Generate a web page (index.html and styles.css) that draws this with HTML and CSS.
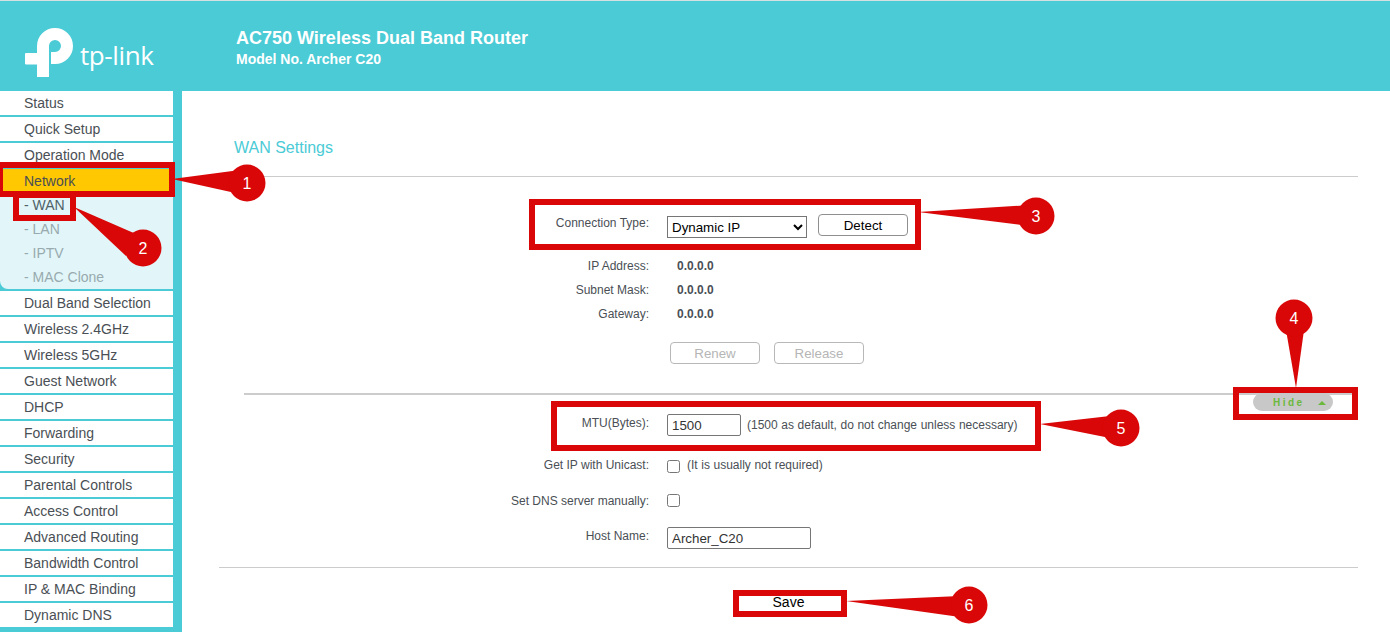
FILE: index.html
```html
<!DOCTYPE html>
<html lang="en">
<head>
<meta charset="utf-8">
<title>WAN Settings</title>
<link rel="stylesheet" href="styles.css">
</head>
<body>
<header class="top">
  <div class="brand">
    <svg class="mark" width="60" height="56" viewBox="20 24 60 56" aria-hidden="true">
      <path d="M43 77V46a12 12 0 1 1 12 12H51" fill="none" stroke="#fff" stroke-width="12"/>
      <rect x="25" y="53" width="24" height="11.500" rx="1" fill="#fff"/>
    </svg>
    <span class="word">tp-link</span>
  </div>
  <div class="product">
    <div class="prod-name">AC750 Wireless Dual Band Router</div>
    <div class="prod-model">Model No. Archer C20</div>
  </div>
</header>
<div class="shell">
  <nav class="side">
    <a class="item">Status</a>
    <a class="item">Quick Setup</a>
    <a class="item">Operation Mode</a>
    <a class="item active">Network</a>
    <div class="sub">
      <a class="sub-item current">- WAN</a>
      <a class="sub-item">- LAN</a>
      <a class="sub-item">- IPTV</a>
      <a class="sub-item">- MAC Clone</a>
    </div>
    <a class="item">Dual Band Selection</a>
    <a class="item">Wireless 2.4GHz</a>
    <a class="item">Wireless 5GHz</a>
    <a class="item">Guest Network</a>
    <a class="item">DHCP</a>
    <a class="item">Forwarding</a>
    <a class="item">Security</a>
    <a class="item">Parental Controls</a>
    <a class="item">Access Control</a>
    <a class="item">Advanced Routing</a>
    <a class="item">Bandwidth Control</a>
    <a class="item">IP &amp; MAC Binding</a>
    <a class="item">Dynamic DNS</a>
  </nav>
  <main class="main">
    <h1 class="title">WAN Settings</h1>
    <hr class="rule">
    <section class="form">
      <div class="row r-conn">
        <label class="lab">Connection Type:</label>
        <div class="val">
          <select class="sel"><option>Dynamic IP</option></select>
          <button class="btn detect" type="button">Detect</button>
        </div>
      </div>
      <div class="row r-info"><label class="lab">IP Address:</label><div class="val addr">0.0.0.0</div></div>
      <div class="row r-info"><label class="lab">Subnet Mask:</label><div class="val addr">0.0.0.0</div></div>
      <div class="row r-info"><label class="lab">Gateway:</label><div class="val addr">0.0.0.0</div></div>
      <div class="actions">
        <button class="btn off" type="button" disabled>Renew</button>
        <button class="btn off" type="button" disabled>Release</button>
      </div>
    </section>
    <div class="fold">
      <hr class="fold-line">
      <div class="hide">Hide<span class="caret"></span></div>
    </div>
    <section class="form">
      <div class="row r-mtu">
        <label class="lab">MTU(Bytes):</label>
        <div class="val"><input class="txt short" value="1500"><span class="note">(1500 as default, do not change unless necessary)</span></div>
      </div>
      <div class="row r-uni">
        <label class="lab">Get IP with Unicast:</label>
        <div class="val"><input class="chk" type="checkbox"><span class="note">(It is usually not required)</span></div>
      </div>
      <div class="row r-dns">
        <label class="lab">Set DNS server manually:</label>
        <div class="val"><input class="chk" type="checkbox"></div>
      </div>
      <div class="row r-host">
        <label class="lab">Host Name:</label>
        <div class="val"><input class="txt long" value="Archer_C20"></div>
      </div>
    </section>
    <hr class="rule rule-end">
    <div class="save-row"><button class="save" type="button">Save</button></div>
  </main>
</div>

<svg class="notes" width="1390" height="632" viewBox="0 0 1390 632">
  <g fill="#d90707">
    <path d="M172 179L240 170V194Z"/><circle cx="247" cy="183" r="18.500"/>
    <path d="M74 207L136 234L126 256Z"/><circle cx="143" cy="248" r="18.500"/>
    <path d="M918 212L1030 205V226Z"/><circle cx="1036" cy="216" r="18.500"/>
    <path d="M1286 330H1304L1296 388Z"/><circle cx="1294" cy="318" r="18.500"/>
    <path d="M1040 424L1110 416V438Z"/><circle cx="1121" cy="428" r="18.500"/>
    <path d="M846 601L960 596V617Z"/><circle cx="969" cy="605" r="18.500"/>
  </g>
  <g class="num">
    <text x="247" y="189">1</text>
    <text x="143" y="254">2</text>
    <text x="1036" y="222">3</text>
    <text x="1294" y="324">4</text>
    <text x="1121" y="434">5</text>
    <text x="969" y="611">6</text>
  </g>
  <g fill="none" stroke="#d90707" stroke-width="6">
    <rect x="0" y="165" width="172" height="29"/>
    <rect x="16" y="195" width="57" height="23"/>
    <rect x="532" y="202" width="386" height="45"/>
    <rect x="1236" y="390" width="119" height="27"/>
    <rect x="554" y="404" width="484" height="44"/>
    <rect x="736" y="593" width="108" height="21"/>
  </g>
</svg>
</body>
</html>
```
FILE: styles.css
```css
* { box-sizing: border-box; }
html, body { margin: 0; padding: 0; }
body {
  width: 1390px;
  height: 632px;
  overflow: hidden;
  position: relative;
  background: #fff;
  font-family: "Liberation Sans", Arial, sans-serif;
  color: #4a4f55;
}
.top {
  height: 91px;
  background: #4acbd6;
  border-top: 1px solid #d5e0e2;
  display: flex;
  color: #fff;
}
.brand {
  width: 236px;
  display: flex;
}
.mark { margin: 23px 0 0 20px; flex: none; }
.word {
  font-family: "Open Sans", sans-serif;
  font-size: 26px;
  font-weight: 400;
  letter-spacing: -0.4px;
  line-height: 30px;
  margin: 39px 0 0 0;
}
.product { padding-top: 26px; }
.prod-name { font-size: 18px; font-weight: 700; line-height: 22px; }
.prod-model { font-size: 14px; font-weight: 700; line-height: 18px; margin-top: 1px; }

.shell { display: flex; height: 541px; overflow: hidden; }
.side {
  width: 182px;
  flex: none;
  background: #4acbd6;
  padding-right: 9px;
}
.item {
  display: block;
  height: 24px;
  margin-bottom: 2px;
  padding-left: 24px;
  background: #fff;
  font-size: 14px;
  line-height: 24px;
  color: #4a4f55;
}
.item.active { background: #ffc800; margin-bottom: 0; }
.sub {
  background: #e2f6f9;
  border-bottom-left-radius: 8px;
  height: 96px;
  margin-bottom: 2px;
}
.sub-item {
  display: block;
  height: 24px;
  padding-left: 24px;
  font-size: 14px;
  line-height: 24px;
  color: #98aaae;
}
.sub-item.current { color: #4f6268; }

.main { flex: 1; padding: 0 32px 0 37px; }
.title {
  margin: 0;
  padding: 48px 0 0 15px;
  font-size: 16px;
  font-weight: 400;
  line-height: 18px;
  color: #4acbd6;
}
.rule { border: 0; height: 1px; background: #ccc; margin: 19px 0 0; }
.form { font-size: 12px; }
.row { display: flex; }
.lab { width: 448px; padding-right: 18px; text-align: right; flex: none; color: #4a4f55; }
.val { display: flex; align-items: center; }
.r-conn { padding-top: 36px; height: 77px; }
.r-conn .lab { line-height: 20px; }
.r-conn .val { margin-top: 3px; height: 20px; }
.sel {
  width: 140px;
  height: 22px;
  margin: 2px 11px 0 0;
  padding: 0;
  border: 1px solid #767676;
  border-radius: 0;
  background: #fff;
  font: 13.33px "Liberation Sans", Arial, sans-serif;
  color: #000;
}
.btn {
  width: 90px;
  height: 22px;
  padding: 0;
  border: 1px solid #8f8f8f;
  border-radius: 4px;
  background: #fff;
  font: 13.33px "Liberation Sans", Arial, sans-serif;
  color: #000;
}
.detect { margin-top: -2px; }
.r-info { height: 24px; line-height: 15px; padding-top: 5px; }
.addr { font-weight: 700; align-self: flex-start; padding-left: 10px; }
.actions { display: flex; gap: 14px; padding: 16px 0 0 451px; }
.off { border-color: #b8b8b8; color: #b5b5b5; }
.fold { height: 12px; margin-top: 29px; position: relative; }
.fold-line { border: 0; height: 2px; background: #ccc; margin: 0 0 0 25px; }
.hide {
  position: absolute;
  left: 1034px;
  top: 0;
  width: 80px;
  height: 18px;
  border-radius: 9px;
  background: #c8c8c8;
  color: #6cb83c;
  font-size: 10px;
  font-weight: 700;
  letter-spacing: 2.5px;
  line-height: 20px;
  padding-left: 20px;
}
.caret {
  position: absolute;
  right: 7px;
  top: 8px;
  border: 4px solid transparent;
  border-top: 0;
  border-bottom-color: #6cb83c;
}
.r-mtu { height: 47px; }
.r-mtu .lab { line-height: 18px; padding-top: 9px; }
.r-mtu .val { height: 22px; margin-top: 9px; }
.txt {
  height: 22px;
  padding: 0 5px 0 4px;
  border: 1px solid #767676;
  border-radius: 2px;
  font: 13.33px "Liberation Sans", Arial, sans-serif;
  color: #333;
  background: #fff;
}
.short { width: 74px; }
.long { width: 144px; }
.note { margin-left: 6px; word-spacing: 0.25px; }
.chk { margin: 0 1px 0 0; width: 13px; height: 13px; flex: none; }
.r-uni { height: 36px; padding-top: 6px; line-height: 15px; }
.r-uni .chk { margin-top: 2px; }
.r-uni .note { margin-top: 0; }
.r-uni .val, .r-dns .val { align-items: flex-start; }
.r-dns { height: 38px; padding-top: 6px; line-height: 15px; }
.r-host { height: 24px; }
.r-host .lab { line-height: 18px; padding-top: 1px; }
.rule-end { margin-top: 17px; }
.save-row { display: flex; justify-content: center; padding: 27px 0 0; }
.save {
  border: 0;
  background: none;
  padding: 0;
  font: 14px "Liberation Sans", Arial, sans-serif;
  color: #000;
  line-height: 15px;
}
.notes { position: absolute; left: 0; top: 0; pointer-events: none; }
.num {
  fill: #fff;
  font: 16px "Liberation Sans", Arial, sans-serif;
  text-anchor: middle;
}
```
